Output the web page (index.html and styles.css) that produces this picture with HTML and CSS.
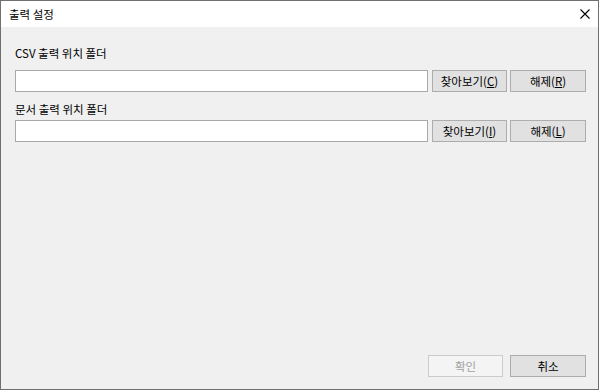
FILE: index.html
```html
<!DOCTYPE html>
<html>
<head>
    <title>출력 설정</title>
    <link rel="stylesheet" href="styles.css">
</head>
<body>
    <div class="window">
        <div class="titlebar">
            <span class="title">출력 설정</span>
            <svg class="close" width="10" height="10" viewBox="0 0 10 10">
                <path d="M0.5 0.5 L9.5 9.5 M9.5 0.5 L0.5 9.5" stroke="#000" stroke-width="1.1" fill="none"/>
            </svg>
        </div>

        <div class="content">
            <div class="label first">CSV 출력 위치 폴더</div>
            <div class="row">
                <input type="text" class="path">
                <button class="btn">찾아보기(<u>C</u>)</button>
                <button class="btn wide">해제(<u>R</u>)</button>
            </div>

            <div class="label second">문서 출력 위치 폴더</div>
            <div class="row">
                <input type="text" class="path">
                <button class="btn">찾아보기(<u>I</u>)</button>
                <button class="btn wide">해제(<u>L</u>)</button>
            </div>

            <div class="footer">
                <button class="btn" disabled>확인</button>
                <button class="btn wide">취소</button>
            </div>
        </div>
    </div>
</body>
</html>
```

FILE: styles.css
```css
html, body { margin: 0; padding: 0; background: #ffffff; }
body { font-family: "Noto Sans CJK KR", "Noto Sans", sans-serif; font-size: 11.5px; color: #000; }

.window { width: 599px; height: 390px; box-sizing: border-box; border: 1px solid #707070; background: #f0f0f0; display: flex; flex-direction: column; }

.titlebar { height: 26px; background: #fff; display: flex; align-items: center; padding: 0 7px 0 8px; }
.title { flex: 1; line-height: 16px; }
.close { display: block; margin-right: 1px; margin-top: -1px; }

.content { flex: 1; display: flex; flex-direction: column; padding: 0 12px 12px 14px; }

.label { line-height: 16px; }
.label.first { margin-top: 18px; margin-bottom: 9px; }
.label.second { margin-top: 9px; margin-bottom: 3px; }

.row { display: flex; height: 22px; }
.path { width: 413px; height: 22px; box-sizing: border-box; margin: 0 4px 0 0; border: 1px solid #a9a9a9; background: #fff; padding: 0 3px; font: inherit; outline: none; }
.row .btn + .btn { margin-left: 3px; }

.btn { width: 75px; height: 22px; box-sizing: border-box; border: 1px solid #adadad; background: #e1e1e1; font: inherit; color: #000; padding: 0; line-height: 18px; }
.btn.wide { width: 76px; }
.btn u { text-underline-offset: 1px; }
.btn:disabled { background: #f4f4f4; border-color: #cccccc; color: #a0a0a0; }

.footer { margin-top: auto; display: flex; justify-content: flex-end; gap: 7px; }
```
